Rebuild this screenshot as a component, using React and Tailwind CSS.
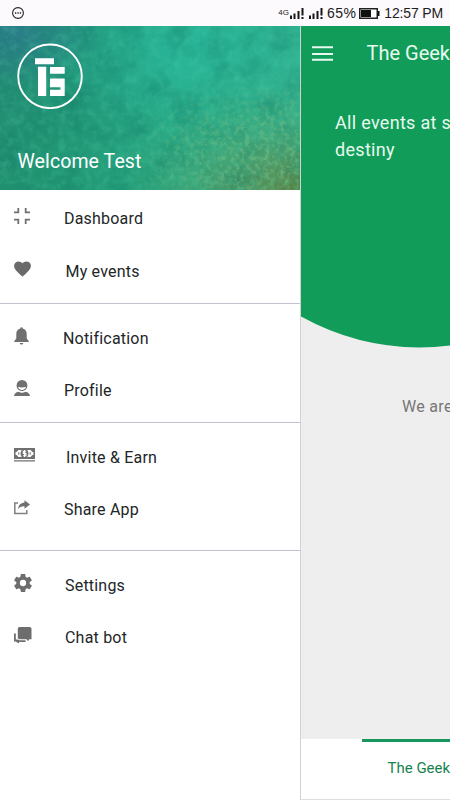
import React from "react";

const collapse = (
  <svg width="16" height="16" viewBox="0 0 16 16" fill="none" stroke="#707070" strokeWidth="1.800">
    <path d="M0 4.300H4.300V0M11.700 0V4.300H16M0 11.700H4.300V16M11.700 16V11.700H16" />
  </svg>
);
const heart = (
  <svg width="17" height="16" viewBox="0 0 17 16" fill="#6a6a6a">
    <path d="M8.500 15.800L7.300 14.600C3 10.700.1 8.100.1 4.800.1 2.200 2.100.4 4.500.4c1.500 0 3 .7 4 1.900 1-1.200 2.500-1.900 4-1.900 2.500 0 4.400 1.800 4.400 4.400 0 3.300-2.900 5.900-7.200 9.800z" />
  </svg>
);
const bell = (
  <svg width="15" height="18" viewBox="0 0 15 18" fill="#707070">
    <path d="M6.300 1.500a1.200 1.200 0 0 1 2.400 0C11.500 2 12.700 4.200 12.700 7v4.600l2 2.400v1H.3v-1l2-2.400V7C2.300 4.200 3.500 2 6.300 1.500zM5.700 16h3.600a1.800 1.500 0 0 1-3.600 0z" />
  </svg>
);
const person = (
  <svg width="16" height="16" viewBox="0 0 16 16" fill="#707070">
    <path fillRule="evenodd" d="M8 0a5.400 5.400 0 0 1 5.400 5.500C13.400 8.700 11 11 8 11S2.600 8.700 2.600 5.500A5.400 5.400 0 0 1 8 0zM3.800 7C4.500 8.800 6 9.900 8 9.900s3.500-1.100 4.200-2.900C9.500 7.500 6.500 7.500 3.800 7z" />
    <path d="M0 16c.3-2.300 1.800-3.600 4.500-4.200 2.200 1.200 4.800 1.200 7 0 2.700.6 4.200 1.900 4.500 4.200z" />
  </svg>
);
const cash = (
  <svg width="21" height="14" viewBox="0 0 21 14" fill="#707070">
    <path fillRule="evenodd" d="M0 0h21v11H0zM4.200 2C3.700 3.300 2.700 4 1.500 4.200v2.600C2.700 7 3.700 7.700 4.200 9h3.500C6.100 7 6.100 4 7.700 2zM16.800 2c.5 1.300 1.500 2 2.700 2.200v2.600c-1.200.2-2.200.9-2.700 2.200h-3.500c1.600-2 1.600-5 0-7z" />
    <path fill="none" stroke="#fff" strokeWidth="1.100" d="M12.100 3.200H9.300V5.400h2.600v2.400H9M10.600 2v7" />
    <path d="M4.300 4.300h1v2.400h-1zM15.700 4.300h1v2.400h-1zM0 12.200h21v1.200H0z" />
  </svg>
);
const share = (
  <svg width="16" height="15" viewBox="0 0 16 15">
    <path d="M4 3H.8v10.500h12V10" fill="none" stroke="#808080" strokeWidth="1.500" />
    <path d="M10.500.3L16 4.500l-5.500 4.300V6.400C7.700 6.200 5.700 7 4 9.300 4.300 5.500 6.600 2.900 10.500 2.500z" fill="#707070" />
  </svg>
);
const gear = (
  <svg width="18" height="18" viewBox="2.300 2 19.400 20" fill="#6d6d6d">
    <path d="M19.430 12.980c.04-.32.07-.64.07-.98s-.03-.66-.07-.98l2.110-1.650c.19-.15.24-.42.120-.64l-2-3.460c-.12-.22-.39-.3-.61-.22l-2.490 1c-.52-.4-1.080-.73-1.690-.98l-.38-2.650C14.460 2.180 14.250 2 14 2h-4c-.25 0-.46.18-.49.42l-.38 2.650c-.61.25-1.170.59-1.690.98l-2.490-1c-.23-.09-.49 0-.61.220l-2 3.460c-.13.220-.07.490.12.640l2.110 1.650c-.04.320-.07.650-.07.980s.03.660.07.980l-2.110 1.650c-.19.150-.24.420-.12.640l2 3.460c.12.220.39.300.61.220l2.490-1c.52.400 1.080.730 1.690.980l.38 2.650c.03.240.24.420.49.420h4c.25 0 .46-.18.490-.42l.38-2.650c.61-.25 1.170-.59 1.690-.98l2.490 1c.23.090.49 0 .61-.22l2-3.460c.12-.22.070-.49-.12-.64zM12 15.500a3.500 3.500 0 1 1 0-7 3.500 3.500 0 0 1 0 7z" />
  </svg>
);
const chat = (
  <svg width="18" height="17" viewBox="0 0 18 17" fill="#6d6d6d">
    <path d="M5.500 0h10.200A1.800 1.800 0 0 1 17.500 1.800V12.300l-2.300 0-1.200 2-1.500-2.100H5.500A1.800 1.800 0 0 1 3.800 10.400V1.800A1.800 1.800 0 0 1 5.500 0z" />
    <path d="M.9 6.500v7h2.600v2M.9 7v6.500M5 14.200h6.500" fill="none" stroke="#6d6d6d" strokeWidth="1.800" />
    <path d="M1 13h4v3.500z" />
  </svg>
);

const groups = [
  {
    box: "pt-[2px] pb-[5px] border-b border-[#c3c2cf]",
    rows: [
      { icon: collapse, label: "Dashboard", height: "h-[53px]", pad: "pb-[5px]", text: "pl-[14px]" },
      { icon: heart, label: "My events", height: "h-[53px]", pad: "pb-[6px]", text: "pl-[15.500px]" },
    ],
  },
  {
    box: "pt-[8px] pb-[5px] border-b border-[#c3c0d6]",
    rows: [
      { icon: bell, label: "Notification", height: "h-[53px]", pad: "pb-[6px]", text: "pl-[13px]" },
      { icon: person, label: "Profile", height: "h-[52px]", pad: "pb-[6px]", text: "pl-[14px]" },
    ],
  },
  {
    box: "pt-[8px] pb-[14px] border-b border-[#c3c0d6]",
    rows: [
      { icon: cash, label: "Invite & Earn", height: "h-[53px]", pad: "pb-[5px]", text: "pl-[16px]" },
      { icon: share, label: "Share App", height: "h-[52px]", pad: "pb-[5px]", text: "pl-[14px]" },
    ],
  },
  {
    box: "pt-[8px]",
    rows: [
      { icon: gear, label: "Settings", height: "h-[53px]", pad: "pb-[6px]", text: "pl-[15px]" },
      { icon: chat, label: "Chat bot", height: "h-[52px]", pad: "pb-[6px]", text: "pl-[15px]" },
    ],
  },
];

function Signal() {
  return (
    <svg width="14" height="11" viewBox="0 0 14 11" fill="#171717">
      <path d="M0 7.500h2V11H0zM3.500 5.500h2V11h-2zM7.500 3h2v8h-2zM11.500 0h2v7.500h-2zM11.500 9h2v2h-2z" />
    </svg>
  );
}

function StatusBar() {
  return (
    <header className="flex h-[26px] shrink-0 items-center justify-between bg-[#fcfafd] pl-[12px] pr-[7px] font-['Liberation_Sans',sans-serif] text-[#202020]">
      <svg width="12" height="12" viewBox="0 0 12 12" fill="none" stroke="#222">
        <circle cx="6" cy="6" r="5.400" strokeWidth="1.100" />
        <path d="M3 6h1.300M5.400 6h1.300M7.800 6h1.300" strokeWidth="1.300" />
      </svg>
      <div className="flex items-center whitespace-nowrap">
        <span className="text-[8px] leading-none">4G</span>
        <span className="ml-px"><Signal /></span>
        <span className="ml-[5px]"><Signal /></span>
        <span className="ml-[4px] text-[14px] leading-[26px] tracking-[0.400px]">65%</span>
        <svg className="ml-[3px]" width="21" height="11" viewBox="0 0 21 11">
          <path d="M.75.750h17.500v9.500H.75z" fill="#fff" stroke="#222" strokeWidth="1.500" />
          <path d="M2 2h10v7H2zM18.500 3h2v5h-2z" fill="#111" />
        </svg>
        <span className="ml-[4px] text-[14px] leading-[26px] tracking-[-0.150px]">12:57 PM</span>
      </div>
    </header>
  );
}

function Texture() {
  return (
    <svg className="absolute inset-0" width="300" height="164" viewBox="0 0 300 164">
      <defs>
        <linearGradient id="base" x1="0" y1="0" x2="1" y2="0.200">
          <stop offset="0" stopColor="#258b74" />
          <stop offset="0.300" stopColor="#229679" />
          <stop offset="0.650" stopColor="#28b08f" />
          <stop offset="1" stopColor="#31b18f" />
        </linearGradient>
        <radialGradient id="blue" cx="0" cy="0.020" r="0.350">
          <stop offset="0" stopColor="#2d7790" stopOpacity="0.850" />
          <stop offset="1" stopColor="#2d7790" stopOpacity="0" />
        </radialGradient>
        <radialGradient id="aqua" cx="0.620" cy="0.100" r="0.500">
          <stop offset="0" stopColor="#2bbba1" stopOpacity="0.600" />
          <stop offset="1" stopColor="#2bbba1" stopOpacity="0" />
        </radialGradient>
        <radialGradient id="olive" cx="1" cy="1" r="0.600">
          <stop offset="0" stopColor="#598043" />
          <stop offset="0.300" stopColor="#5c9359" stopOpacity="0.750" />
          <stop offset="0.650" stopColor="#4faa78" stopOpacity="0.450" />
          <stop offset="1" stopColor="#46ab77" stopOpacity="0" />
        </radialGradient>
        <linearGradient id="low" x1="0" y1="0" x2="0" y2="1">
          <stop offset="0.300" stopColor="#219168" stopOpacity="0" />
          <stop offset="1" stopColor="#219168" stopOpacity="0.500" />
        </linearGradient>
        <radialGradient id="fade" cx="0.920" cy="0.800" r="0.550">
          <stop offset="0" stopColor="#fff" />
          <stop offset="0.400" stopColor="#fff" stopOpacity="0.800" />
          <stop offset="1" stopColor="#fff" stopOpacity="0" />
        </radialGradient>
        <mask id="corner"><rect width="300" height="164" fill="url(#fade)" /></mask>
        <filter id="light" x="0" y="0" width="100%" height="100%" colorInterpolationFilters="sRGB">
          <feTurbulence type="fractalNoise" baseFrequency="0.120" numOctaves="5" seed="8" />
          <feColorMatrix values="0 0 0 0 .30  0 0 0 0 .80  0 0 0 0 .65  1.800 0 0 0 -.75" />
        </filter>
        <filter id="dark" x="0" y="0" width="100%" height="100%" colorInterpolationFilters="sRGB">
          <feTurbulence type="fractalNoise" baseFrequency="0.035" numOctaves="5" seed="21" />
          <feColorMatrix values="0 0 0 0 .06  0 0 0 0 .47  0 0 0 0 .39  1.600 0 0 0 -.65" />
        </filter>
        <filter id="gold" x="0" y="0" width="100%" height="100%" colorInterpolationFilters="sRGB">
          <feTurbulence type="fractalNoise" baseFrequency="0.200" numOctaves="4" seed="4" />
          <feColorMatrix values="0 0 0 0 .46  0 0 0 0 .76  0 0 0 0 .53  3.500 0 0 0 -1.550" />
        </filter>
      </defs>
      <rect width="300" height="164" fill="url(#base)" />
      <rect width="300" height="164" fill="url(#aqua)" />
      <rect width="300" height="164" fill="url(#low)" />
      <rect width="300" height="164" fill="url(#blue)" />
      <rect width="300" height="164" fill="url(#olive)" />
      <rect width="300" height="164" filter="url(#dark)" opacity="0.500" />
      <rect width="300" height="164" filter="url(#light)" opacity="0.350" />
      <g mask="url(#corner)"><rect width="300" height="164" filter="url(#gold)" opacity="0.550" /></g>
    </svg>
  );
}

function Drawer() {
  return (
    <aside className="w-[300px] shrink-0 bg-white">
      <div className="relative h-[164px] overflow-hidden bg-[#249b7b]">
        <Texture />
        <div className="relative flex flex-col pl-[17px] pt-[17px] text-white">
          <svg width="66" height="66" viewBox="0 0 66 66">
            <circle cx="33" cy="33.300" r="31.800" fill="none" stroke="#fff" strokeWidth="1.900" />
            <path fill="#fff" d="M18 15.300h19v6H18zM21 23.700h8.200V53H21zM33 24h14.700v6.700H33zM33 35.500h14.700V53H33v-6.300h10.500v-2.500H33z" />
          </svg>
          <span className="mt-[40px] pl-[0.500px] text-[19.500px] leading-[26px] tracking-[0.100px]">Welcome Test</span>
        </div>
      </div>
      <nav>
        {groups.map((group, i) => (
          <ul key={i} className={group.box}>
            {group.rows.map((row) => (
              <li key={row.label} className={`flex items-center pl-[14px] ${row.height}`}>
                <span className={`flex w-[36px] shrink-0 ${row.pad}`}>{row.icon}</span>
                <span className={`text-[16px] leading-[24px] tracking-[0.200px] text-[#222627] ${row.text}`}>{row.label}</span>
              </li>
            ))}
          </ul>
        ))}
      </nav>
    </aside>
  );
}

function EventsPage() {
  return (
    <main className="flex w-[150px] shrink-0 flex-col overflow-hidden border-l border-[#d2d2d2] bg-[#eeeeee]">
      <section className="relative h-[322px] shrink-0 whitespace-nowrap text-[#e8f9ef]">
        <svg className="absolute left-0 top-0" width="149" height="322" viewBox="0 0 149 322">
          <path d="M0 0H149V319.500Q70 329 0 290.500Z" fill="#119d59" />
        </svg>
        <div className="relative flex items-center pl-[11px] pt-[13px]">
          <svg width="22" height="17" viewBox="0 0 22 17" fill="#e8f9ef">
            <path d="M0 1h22v2H0zM0 8h22v2H0zM0 14h22v2H0z" />
          </svg>
          <span className="ml-[33.500px] text-[20px] leading-[28px]">The Geek</span>
        </div>
        <p className="relative pl-[34px] pt-[42px] text-[18px] leading-[27px] tracking-[0.300px]">
          All events at s
          <br />
          destiny
        </p>
      </section>
      <p className="flex-1 whitespace-nowrap pl-[101px] pt-[47px] text-[16px] leading-[24px] tracking-[0.300px] text-[#777777]">We are</p>
      <footer className="flex h-[61px] shrink-0 flex-col border-b border-[#dedede] bg-white">
        <div className="ml-[61px] h-[3px] bg-[#17955c]" />
        <span className="whitespace-nowrap pl-[86.500px] pt-[15px] text-[15px] leading-[22px] text-[#16824f]">The Geek</span>
      </footer>
    </main>
  );
}

export default function App() {
  return (
    <div className="flex h-[800px] w-[450px] flex-col overflow-hidden bg-white font-[Roboto,sans-serif]">
      <StatusBar />
      <div className="flex min-h-0 flex-1">
        <Drawer />
        <EventsPage />
      </div>
    </div>
  );
}
